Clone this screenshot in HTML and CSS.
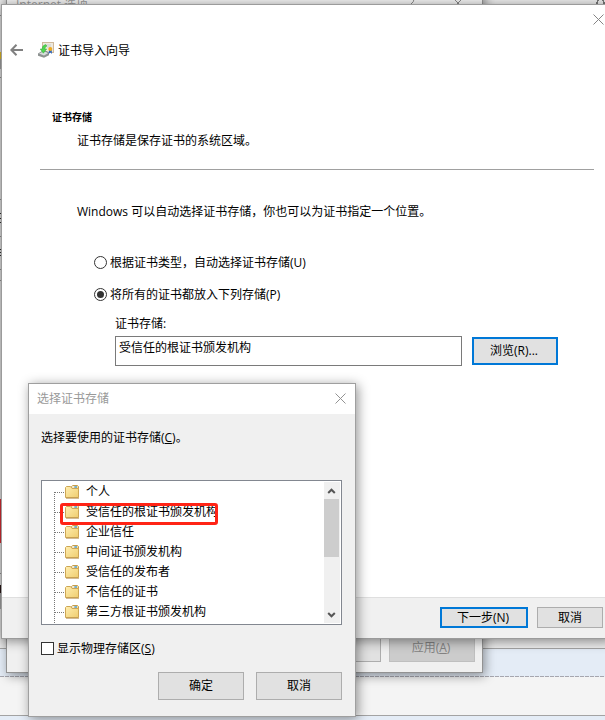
FILE: index.html
```html
<!DOCTYPE html>
<html lang="zh-CN">
<head>
<meta charset="utf-8">
<title>证书导入向导</title>
<link rel="stylesheet" href="styles.css">
</head>
<body>
<main class="desktop">
  <svg class="backdrop" width="605" height="720" viewBox="0 0 605 720" shape-rendering="crispEdges">
    <rect width="605" height="720" fill="#ececec"/>
    <path d="M0 15.5h2M0 77.5h2M0 199.5h2M0 236.5h2M0 269.5h2M0 280.5h2M0 573.5h2" stroke="#999"/>
    <rect y="52" width="2" height="7" fill="#efc526"/>
    <rect y="59" width="2" height="10" fill="#aaa"/>
    <path d="M0 213.5h2M0 218.5h2M0 222.5h1M0 249.5h2M0 252.5h1M0 255.5h2" stroke="#333" stroke-width="1.5"/>
    <rect y="499" width="2" height="44" fill="#e03036"/>
    <rect y="585" width="2" height="8" fill="#2b1717"/>
    <rect y="593" width="2" height="16" fill="#aaa"/>
    <rect y="649" width="605" height="71" fill="#e4ecf6"/>
    <path d="M0 648.5h605M0 715.5h605" stroke="#a3a3a3"/>
    <rect y="677" width="605" height="38" fill="#f4f4f4"/>
    <path d="M0 676.5h605" stroke="#a6a6ae" stroke-dasharray="4 1"/>
    <circle cx="600.5" cy="3" r="3.5" fill="none" stroke="#777" stroke-width="1.5"/>
  </svg>

  <section class="window options">
    <header class="options-title">
      <span>Internet 选项</span>
      <svg width="60" height="12" viewBox="0 0 60 12" fill="none" stroke="#888"><path d="M9 1Q9 4 6 6V8M48 0l10 10M58 0L48 10"/></svg>
    </header>
    <footer class="options-footer">
      <span class="button"></span>
      <span class="button disabled"><span>应用(<u>A</u>)</span></span>
    </footer>
  </section>

  <section class="window wizard">
    <svg class="wizard-close" width="11" height="11" viewBox="0 0 11 11" stroke="#858585"><path d="M.5.5l10 10M10.5.5l-10 10"/></svg>
    <header class="wizard-title">
      <svg width="13" height="12" viewBox="0 0 13 12" fill="none" stroke="#808080" stroke-width="2"><path d="M1 6h12M6.500.8L1.400 6l5.100 5.200"/></svg>
      <svg class="cert" width="16" height="16" viewBox="0 0 16 16">
        <rect x="4.5" y=".5" width="11" height="10" fill="#eee9dd" stroke="#cfb89b"/>
        <path d="M7 3h6M9 5h4" stroke="#c9cdd0"/>
        <path d="M0 11.5l4-2.5h5l2 2v2.2L6 15.7 0 13.8z" fill="#8d9291"/>
        <path d="M1 11.4l3.3-1.5H8l2 1.3-4 2.2z" fill="#d7dddc"/>
        <path d="M7.5 2.5Q4 3.5 4.1 7H2.2l3.1 4.2L8.7 7H6.8q0-2.1 2.2-3z" fill="#50d550" stroke="#36ad3b" stroke-width=".5"/>
        <path d="M11 8l-.5 4 2-1.5L14 12l-.3-4z" fill="#2d68bd"/>
        <circle cx="12.3" cy="7" r="2" fill="#eeaa22"/>
      </svg>
      <h1>证书导入向导</h1>
    </header>
    <div class="intro">
      <h2>证书存储</h2>
      <p>证书存储是保存证书的系统区域。</p>
    </div>
    <div class="content">
      <p class="lead">Windows 可以自动选择证书存储，你也可以为证书指定一个位置。</p>
      <div class="radio"><i></i><span>根据证书类型，自动选择证书存储(U)</span></div>
      <div class="radio checked"><i></i><span>将所有的证书都放入下列存储(P)</span></div>
      <div class="store">
        <p>证书存储:</p>
        <div class="store-row">
          <div class="field">受信任的根证书颁发机构</div>
          <span class="button primary browse">浏览(R)...</span>
        </div>
      </div>
    </div>
    <footer class="wizard-footer">
      <span class="button primary next">下一步(N)</span>
      <span class="button cancel">取消</span>
    </footer>
  </section>

  <section class="window dialog">
    <header class="dialog-title">
      <span>选择证书存储</span>
      <svg width="11" height="11" viewBox="0 0 11 11" stroke="#929292"><path d="M.5.5l10 10M10.5.5l-10 10"/></svg>
    </header>
    <p class="prompt">选择要使用的证书存储(<u>C</u>)。</p>
    <svg width="0" height="0" class="defs">
      <defs>
        <linearGradient id="paper" x2="1" y2="1"><stop stop-color="#ffeeb0"/><stop offset="1" stop-color="#efcd70"/></linearGradient>
        <symbol id="folder" viewBox="0 0 14 14">
          <path d="M6.5 3V1.5L8 .5h4.5l1 1V4z" fill="#f5df9d" stroke="#c69c4b"/>
          <path d="M7 2h2" stroke="#fff"/><path d="M9.5 2h2.5" stroke="#4ba0e0"/>
          <path d="M.5 12.5v-10l1-1h4l1.5 2h6.500v9z" fill="url(#paper)" stroke="#cda655"/>
          <path d="M9.500 2h2.500" stroke="#4ba0e0"/>
          <path d="M1 13.300h13" stroke="#af8540" stroke-width=".7"/>
        </symbol>
      </defs>
    </svg>
    <div class="tree">
      <ul>
        <li><svg><use href="#folder"/></svg>个人</li>
        <li><svg><use href="#folder"/></svg>受信任的根证书颁发机构</li>
        <li><svg><use href="#folder"/></svg>企业信任</li>
        <li><svg><use href="#folder"/></svg>中间证书颁发机构</li>
        <li><svg><use href="#folder"/></svg>受信任的发布者</li>
        <li><svg><use href="#folder"/></svg>不信任的证书</li>
        <li><svg><use href="#folder"/></svg>第三方根证书颁发机构</li>
      </ul>
      <div class="scrollbar">
        <svg width="16" height="17" viewBox="0 0 16 17" fill="none" stroke="#555" stroke-width="2"><path d="M4.200 11L7.500 7.700l3.300 3.300"/></svg>
        <div class="thumb"></div>
        <svg class="down" width="16" height="17" viewBox="0 0 16 17" fill="none" stroke="#555" stroke-width="2"><path d="M4.200 7l3.300 3.300L10.800 7"/></svg>
      </div>
      <div class="highlight"></div>
    </div>
    <div class="check"><i></i><span>显示物理存储区(<u>S</u>)</span></div>
    <footer class="dialog-footer">
      <span class="button">确定</span>
      <span class="button">取消</span>
    </footer>
  </section>
</main>
</body>
</html>
```

FILE: styles.css
```css
* { box-sizing: border-box; }
body {
  margin: 0;
  font: 12px/16px "Open Sans", "Noto Sans CJK SC", sans-serif;
  color: #000;
}
h1, h2, p, ul { margin: 0; padding: 0; font-size: 12px; font-weight: 400; }
svg { display: block; flex: none; }
u { text-underline-offset: 1px; }

.desktop { position: relative; width: 605px; height: 720px; overflow: hidden; }
.window { position: absolute; display: flex; flex-direction: column; background: #f0f0f0; white-space: nowrap; }

.button {
  display: flex;
  align-items: center;
  justify-content: center;
  width: 86px;
  height: 28px;
  border: 1px solid #adadad;
  background: #e1e1e1;
}
.button.primary { padding-right: 2px; border: 2px solid #0078d7; }
.button.disabled { padding-right: 2px; border-color: #bfbfbf; background: #ccc; color: #838383; }

.options {
  left: 6px;
  top: -20px;
  width: 477px;
  height: 693px;
  border: 1px solid #929292;
  justify-content: space-between;
  box-shadow: 2px 3px 10px rgba(0, 0, 0, .4);
}
.options-title { display: flex; justify-content: space-between; padding: 16px 17px 0 9px; color: #999; }
.options-title svg { margin-top: 1px; }
.options-footer { display: flex; justify-content: flex-end; gap: 8px; padding: 0 7px 10px 0; }

.wizard {
  left: 1px;
  top: 4px;
  width: 611px;
  height: 635px;
  border: 1px solid #9b9b9b;
  background: #fff;
  box-shadow: 0 2px 11px rgba(0, 0, 0, .45);
}
.wizard-close { margin: 9px 0 0 591px; }
.wizard-title { display: flex; align-items: center; height: 16px; margin: 17px 0 0 8px; }
.wizard-title .cert { margin: 0 4px 0 15px; }
.wizard-title h1 { padding-top: 2px; }
.intro { width: 554px; height: 63px; margin: 49px 0 0 38px; padding: 2px 0 0 12px; border-bottom: 1px solid #a0a0a0; }
.intro h2 { font-size: 10px; font-weight: 700; line-height: 16px; }
.intro p { margin: 8px 0 0 25px; }
.content { padding: 34px 0 0 75px; }
.radio { display: flex; align-items: center; gap: 3px; height: 16px; margin: 35px 0 0 17px; }
.radio i { width: 13px; height: 13px; margin-bottom: 1px; border: 1px solid #333; border-radius: 50%; background: #fff; }
.radio.checked { margin-top: 16px; }
.radio.checked i { padding: 2px; background: #333 content-box; }
.store { margin: 13px 0 0 38px; }
.store-row { display: flex; align-items: center; gap: 10px; margin-top: 4px; }
.field { width: 347px; height: 30px; padding: 3px; border: 1px solid #7a7a7a; }
.wizard-footer {
  display: flex;
  gap: 9px;
  height: 41px;
  margin-top: auto;
  padding: 9px 0 0 438px;
  border-top: 1px solid #dfdfdf;
  background: #f0f0f0;
}
.wizard-footer .button { height: 21px; }
.wizard-footer .next { width: 88px; }
.wizard-footer .cancel { width: 66px; }

.dialog {
  left: 28px;
  top: 383px;
  width: 328px;
  height: 334px;
  border: 1px solid #9f9f9f;
  box-shadow: 2px 2px 11px rgba(0, 0, 0, .42);
}
.dialog-title { display: flex; align-items: center; justify-content: space-between; height: 30px; padding: 0 9px 0 8px; background: #fff; color: #999; }
.dialog-title svg { margin-bottom: 1px; }
.prompt { margin: 16px 0 0 12px; }
.defs { position: absolute; }
.tree { position: relative; display: flex; justify-content: space-between; width: 301px; height: 145px; margin: 34px 0 0 12px; padding: 1px; border: 1px solid #828790; background: #fff; }
.tree ul { width: 270px; list-style: none; background: repeating-linear-gradient(#777 0 1px, transparent 1px 2px) 11px 10px / 1px 131px no-repeat; }
.tree li { display: flex; align-items: center; height: 20px; padding-left: 12px; }
.tree li::before { content: ""; width: 10px; height: 1px; background: repeating-linear-gradient(90deg, #777 0 1px, transparent 1px 2px); }
.tree li svg { width: 14px; height: 14px; margin-right: 7px; }
.scrollbar { display: flex; flex-direction: column; width: 16px; background: #f0f0f0; }
.thumb { width: 15px; height: 58px; background: #cdcdcd; }
.scrollbar .down { margin-top: auto; }
.highlight { position: absolute; left: 18px; top: 22px; width: 158px; height: 22px; border: 3px solid #ff2416; border-radius: 3px; }
.check { display: flex; align-items: center; gap: 3px; height: 16px; margin: 16px 0 0 12px; }
.check i { width: 13px; height: 13px; margin-bottom: 1px; border: 1px solid #333; background: #fff; }
.dialog-footer { display: flex; gap: 12px; margin: 15px 0 0 129px; }
```
